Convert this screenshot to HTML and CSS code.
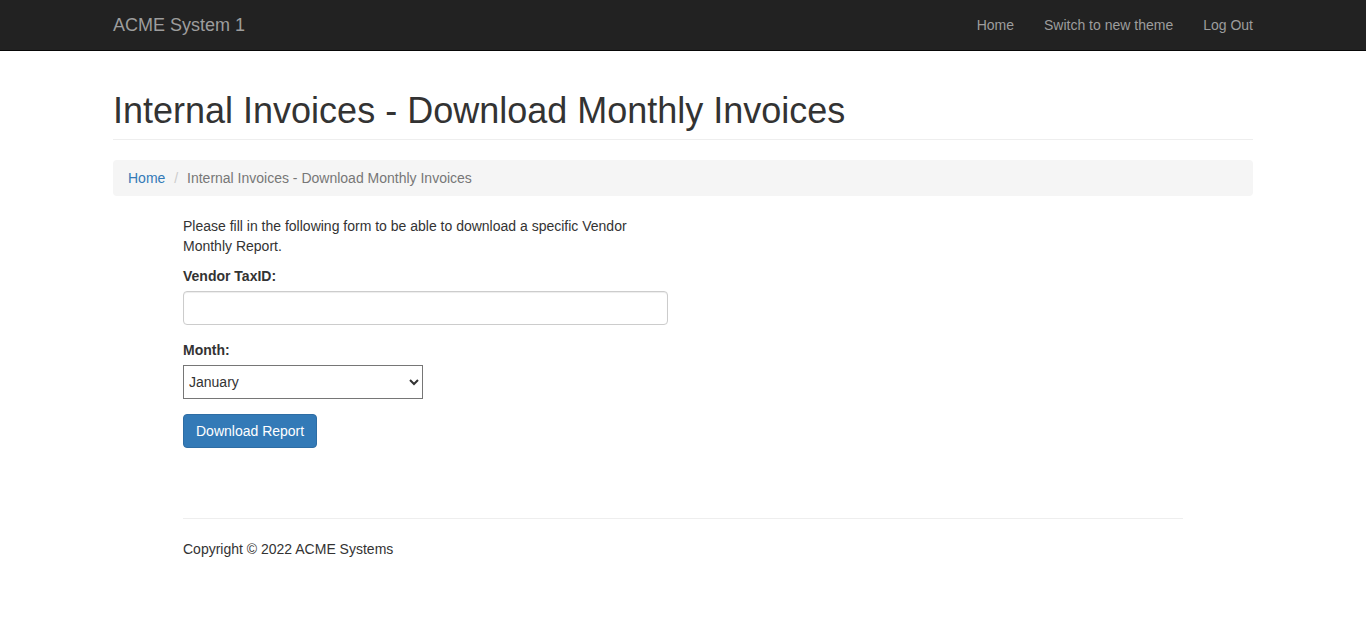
FILE: index.html
```html
<!DOCTYPE html>
<html lang="en">
<head>
<meta charset="utf-8">
<title>Internal Invoices - Download Monthly Invoices</title>
<link rel="stylesheet" href="styles.css">
</head>
<body>
<nav class="navbar">
  <div class="container nav-inner">
    <a class="brand" href="#">ACME System 1</a>
    <ul class="nav-links">
      <li><a href="#">Home</a></li>
      <li><a href="#">Switch to new theme</a></li>
      <li><a href="#">Log Out</a></li>
    </ul>
  </div>
</nav>
<div class="container">
  <h1 class="page-header">Internal Invoices - Download Monthly Invoices</h1>
  <ol class="breadcrumb">
    <li><a href="#">Home</a></li>
    <li class="active">Internal Invoices - Download Monthly Invoices</li>
  </ol>
</div>
<div class="body-content">
  <div class="col-half">
    <p class="intro">Please fill in the following form to be able to download a specific Vendor Monthly Report.</p>
    <form class="form">
      <div class="form-group">
        <label for="taxid">Vendor TaxID:</label>
        <input id="taxid" class="form-control" type="text">
      </div>
      <div class="form-group">
        <label for="month">Month:</label>
        <select id="month" class="month-select">
          <option>January</option>
          <option>February</option>
          <option>March</option>
          <option>April</option>
          <option>May</option>
          <option>June</option>
          <option>July</option>
          <option>August</option>
          <option>September</option>
          <option>October</option>
          <option>November</option>
          <option>December</option>
        </select>
      </div>
      <button type="button" class="btn-primary">Download Report</button>
    </form>
  </div>
  <footer class="footer">
    <hr class="footer-rule">
    <p>Copyright © 2022 ACME Systems</p>
  </footer>
</div>
</body>
</html>
```
FILE: styles.css
```css
* { box-sizing: border-box; }
html, body { margin: 0; padding: 0; }
body {
  font-family: "Liberation Sans", Arial, Helvetica, sans-serif;
  font-size: 14px;
  line-height: 20px;
  color: #333;
  background: #fff;
}
a { text-decoration: none; }

.container {
  width: 1170px;
  margin: 0 auto;
  padding: 0 15px;
}

.navbar {
  background: #222;
  border-bottom: 1px solid #080808;
  height: 51px;
}
.nav-inner {
  display: flex;
  justify-content: space-between;
  align-items: center;
  height: 50px;
}
.brand {
  color: #9d9d9d;
  font-size: 18px;
  line-height: 20px;
  padding: 15px 0;
}
.nav-links {
  list-style: none;
  margin: 0 -15px 0 0;
  padding: 0;
  display: flex;
}
.nav-links a {
  display: block;
  color: #9d9d9d;
  padding: 15px;
  line-height: 20px;
}

.page-header {
  font-size: 36px;
  font-weight: 500;
  line-height: 1.1;
  margin: 40px 0 20px;
  padding-bottom: 8px;
  border-bottom: 1px solid #eee;
  color: #333;
}

.breadcrumb {
  list-style: none;
  margin: 0 0 20px;
  padding: 8px 15px;
  background: #f5f5f5;
  border-radius: 4px;
}
.breadcrumb li { display: inline-block; }
.breadcrumb li + li::before {
  content: "/\00a0";
  padding: 0 5px;
  color: #ccc;
}
.breadcrumb a { color: #337ab7; }
.breadcrumb .active { color: #777; }

.body-content {
  width: 1000px;
  margin: 0 auto;
}
.col-half { width: 485px; }
.intro { margin: 0 0 10px; }

.form-group { margin-bottom: 15px; }
.form-group label {
  display: block;
  font-weight: bold;
  margin-bottom: 5px;
}
.form-control {
  display: block;
  width: 100%;
  height: 34px;
  padding: 6px 12px;
  font-family: inherit;
  font-size: 14px;
  color: #555;
  background: #fff;
  border: 1px solid #ccc;
  border-radius: 4px;
  box-shadow: inset 0 1px 1px rgba(0,0,0,.075);
}
.month-select {
  display: block;
  width: 240px;
  height: 34px;
  font-family: inherit;
  font-size: 14px;
  color: #333;
  border: 1px solid #767676;
  border-radius: 0;
  background: #fff;
  padding: 0 1px;
}
.btn-primary {
  display: inline-block;
  height: 34px;
  padding: 6px 12px;
  font-family: inherit;
  font-size: 14px;
  line-height: 20px;
  color: #fff;
  background: #337ab7;
  border: 1px solid #2e6da4;
  border-radius: 4px;
  cursor: pointer;
}

.footer { margin-top: 70px; }
.footer-rule {
  margin: 0 0 20px;
  border: 0;
  border-top: 1px solid #eee;
}
.footer p { margin: 0 0 10px; }
```
